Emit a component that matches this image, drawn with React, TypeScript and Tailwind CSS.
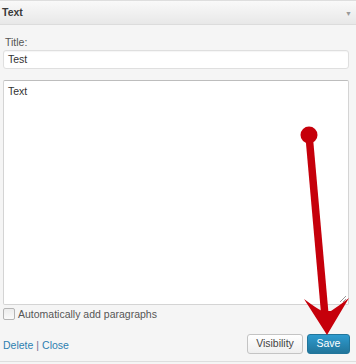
export default function App() {
  return (
    <div className="relative w-[356px] h-[364px] overflow-hidden bg-[#f5f5f5] text-[#333] text-[10.5px] font-['Liberation_Sans',Arial,sans-serif]">
      <div className="h-[1px] bg-[#dedede]" />
      <div className="h-[24px] flex items-center justify-between pl-[2px] pr-[4px] bg-gradient-to-b from-[#f9f9f9] to-[#e8e8e8] border-b border-[#dcdcdc]">
        <span className="font-bold text-[10.5px] text-[#3a3a3a]">Text</span>
        <span className="text-[#999] text-[7px] leading-none mt-[2px]">▼</span>
      </div>

      <div className="pl-[3px] pr-[7px] pt-[11px]">
        <div className="pl-[2px] leading-[12px] text-[#555]">Title:</div>
        <div className="mt-[2px] h-[19px] flex items-center px-[4px] bg-white border border-[#dfdfdf] rounded-[3px] shadow-[inset_0_1px_1px_rgba(0,0,0,0.04)] text-[#333]">
          Test
        </div>
        <div className="relative mt-[11px] h-[225px] pt-[3px] px-[4px] bg-white border border-[#d4d4d4] border-t-[#bdbdbd] rounded-[2px] text-[#333]">
          Text
          <svg className="absolute right-[1px] bottom-[1px]" width="8" height="8" viewBox="0 0 8 8">
            <path d="M1 7 L7 1 M4 7 L7 4" stroke="#9a9a9a" strokeWidth="1" />
          </svg>
        </div>
        <div className="mt-[3px] h-[12px] flex items-center gap-[3px]">
          <span className="w-[12px] h-[12px] rounded-[2px] border border-[#b4b4b4] bg-gradient-to-b from-[#ececec] to-[#fafafa]" />
          <span className="text-[#555] leading-[12px]">Automatically add paragraphs</span>
        </div>
        <div className="mt-[14px] h-[20px] flex items-center justify-between">
          <div className="flex items-center gap-[3px] mt-[4px]">
            <span className="text-[#2d7fb0]">Delete</span>
            <span className="text-[#7a6f92]">|</span>
            <span className="text-[#2d7fb0]">Close</span>
          </div>
          <div className="flex items-center gap-[4px] mr-[-1px]">
            <span className="w-[56px] h-[20px] flex items-center justify-center rounded-[3px] border border-[#c4c4c4] bg-gradient-to-b from-white to-[#efefef] text-[#444]">
              Visibility
            </span>
            <span className="w-[43px] h-[20px] flex items-center justify-center rounded-[3px] border border-[#21759b] bg-gradient-to-b from-[#2e9bcf] to-[#21759b] text-white">
              Save
            </span>
          </div>
        </div>
      </div>
      <div className="absolute left-0 right-0 bottom-[2px] h-[1px] bg-[#dedede]" />

      <svg className="absolute inset-0 pointer-events-none" width="356" height="364" viewBox="0 0 356 364">
        <line x1="309" y1="135" x2="325" y2="316" stroke="#c6000b" strokeWidth="7.5" />
        <circle cx="309" cy="135" r="8.5" fill="#c6000b" />
        <path d="M327 335 L304 299 Q316 308 322 311 L331 311 Q340 305 349 298 Z" fill="#c6000b" />
      </svg>
    </div>
  );
}
